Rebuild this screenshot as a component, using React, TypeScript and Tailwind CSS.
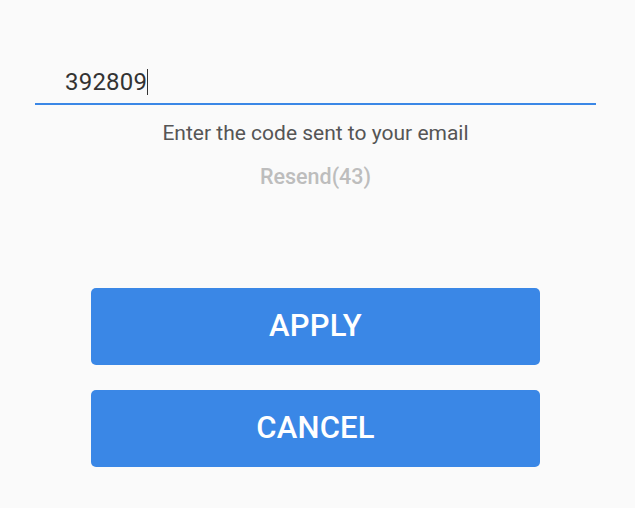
import React from "react";

export default function App() {
  return (
    <div className="w-[635px] h-[508px] bg-[#fafafa]" style={{ fontFamily: "Roboto, 'Liberation Sans', sans-serif" }}>
      <div className="w-[631px] flex flex-col">
        <div className="pt-[64px] pl-[35px]">
          <div className="w-[561px] border-b-2 border-[#3a87e6] h-[41px] pl-[30px] flex items-start">
            <span className="text-[24px] leading-[36px] text-[#333] tracking-[0.2px]">392809</span>
            <span className="w-px h-[26px] bg-[#333] mt-[5px]" />
          </div>
        </div>
        <div className="text-center text-[21px] leading-[26px] text-[#555] mt-[15px]">Enter the code sent to your email</div>
        <div className="text-center text-[21.5px] leading-[26px] font-medium text-[#bdbdbd] mt-[18px]">Resend(43)</div>
        <div className="flex flex-col items-center gap-[25px] mt-[98px]">
          <button className="w-[449px] h-[77px] rounded-[5px] bg-[#3a87e6] text-white text-[31px] font-medium tracking-[0.2px]">APPLY</button>
          <button className="w-[449px] h-[77px] rounded-[5px] bg-[#3a87e6] text-white text-[31px] font-medium tracking-[0.2px]">CANCEL</button>
        </div>
      </div>
    </div>
  );
}
